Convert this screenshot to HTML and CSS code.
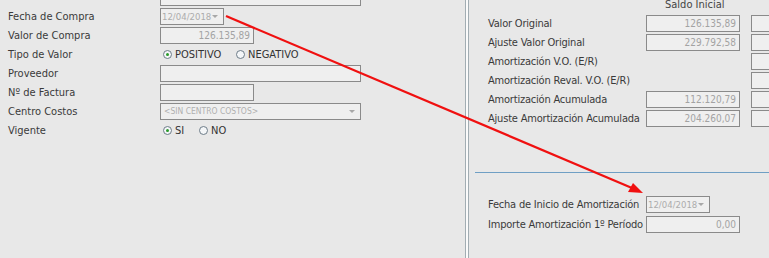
FILE: index.html
```html
<!DOCTYPE html>
<html lang="es">
<head>
  <meta charset="UTF-8">
  <title>Alta de Bien</title>
  <link rel="stylesheet" href="styles.css">
</head>
<body>

  <div class="pagina">

    <div class="panel-izq">
      <div class="fila">
        <span class="etiqueta"></span>
        <div class="campo ancho-lg"><span class="flecha"></span></div>
      </div>
      <div class="fila">
        <span class="etiqueta">Fecha de Compra</span>
        <div class="campo fecha">12/04/2018<span class="flecha"></span></div>
      </div>
      <div class="fila">
        <span class="etiqueta">Valor de Compra</span>
        <div class="campo ancho-md num">126.135,89</div>
      </div>
      <div class="fila">
        <span class="etiqueta">Tipo de Valor</span>
        <div class="radios">
          <label class="radio activo"><span class="circulo"></span>POSITIVO</label>
          <label class="radio"><span class="circulo"></span>NEGATIVO</label>
        </div>
      </div>
      <div class="fila">
        <span class="etiqueta">Proveedor</span>
        <div class="campo ancho-lg"></div>
      </div>
      <div class="fila">
        <span class="etiqueta">Nº de Factura</span>
        <div class="campo ancho-md"></div>
      </div>
      <div class="fila">
        <span class="etiqueta">Centro Costos</span>
        <div class="campo ancho-lg combo">&lt;SIN CENTRO COSTOS&gt;<span class="flecha"></span></div>
      </div>
      <div class="fila">
        <span class="etiqueta">Vigente</span>
        <div class="radios">
          <label class="radio radio-si activo"><span class="circulo"></span>SI</label>
          <label class="radio"><span class="circulo"></span>NO</label>
        </div>
      </div>
    </div>

    <div class="separador"></div>

    <div class="panel-der">
      <div class="fila-der">
        <span class="etiqueta"></span>
        <span class="titulo-col">Saldo Inicial</span>
      </div>
      <div class="fila-der">
        <span class="etiqueta">Valor Original</span>
        <div class="campo ancho-md num">126.135,89</div>
        <div class="campo ancho-md"></div>
      </div>
      <div class="fila-der">
        <span class="etiqueta">Ajuste Valor Original</span>
        <div class="campo ancho-md num">229.792,58</div>
        <div class="campo ancho-md"></div>
      </div>
      <div class="fila-der">
        <span class="etiqueta">Amortización V.O. (E/R)</span>
        <span></span>
        <div class="campo ancho-md"></div>
      </div>
      <div class="fila-der">
        <span class="etiqueta">Amortización Reval. V.O. (E/R)</span>
        <span></span>
        <div class="campo ancho-md"></div>
      </div>
      <div class="fila-der">
        <span class="etiqueta">Amortización Acumulada</span>
        <div class="campo ancho-md num">112.120,79</div>
        <div class="campo ancho-md"></div>
      </div>
      <div class="fila-der">
        <span class="etiqueta">Ajuste Amortización Acumulada</span>
        <div class="campo ancho-md num">204.260,07</div>
        <div class="campo ancho-md"></div>
      </div>

      <hr class="linea-azul">

      <div class="bloque-amort">
        <div class="fila-der">
          <span class="etiqueta">Fecha de Inicio de Amortización</span>
          <div class="campo fecha">12/04/2018<span class="flecha"></span></div>
        </div>
        <div class="fila-der">
          <span class="etiqueta">Importe Amortización 1º Período</span>
          <div class="campo ancho-md num">0,00</div>
        </div>
      </div>
    </div>

    <svg class="marca" width="769" height="258" viewBox="0 0 769 258">
      <line x1="226" y1="16" x2="632" y2="188" stroke="#f01010" stroke-width="2.2"/>
      <polygon points="643,193 628,192 633,183" fill="#f01010"/>
    </svg>

  </div>

</body>
</html>
```

FILE: styles.css
```css
body {
  margin: 0;
  background: #e8e8e8;
  font-family: "DejaVu Sans Condensed", "DejaVu Sans", sans-serif;
  font-stretch: condensed;
  font-size: 11px;
  color: #3a3a3a;
  overflow: hidden;
}

.pagina {
  position: relative;
  display: flex;
  width: 769px;
  height: 258px;
  overflow: hidden;
}

/* panel izquierdo */
.panel-izq {
  flex: none;
  width: 465px;
  padding-left: 8px;
  margin-top: -12px;
  box-sizing: border-box;
}

.fila {
  display: grid;
  grid-template-columns: 152px auto;
  align-items: center;
  height: 19px;
}

.etiqueta {
  white-space: nowrap;
}

.campo {
  position: relative;
  height: 17px;
  box-sizing: border-box;
  border: 1px solid #8a8a8a;
  background: #efefef;
  color: #a3a3a3;
  font-size: 10px;
  line-height: 15px;
  padding: 0 3px;
  white-space: nowrap;
}

.ancho-lg { width: 201px; }
.ancho-md { width: 94px; }

.fecha {
  width: 64px;
  padding-left: 1px;
  font-size: 9.5px;
  color: #acacac;
}

.num { text-align: right; }

.combo {
  font-size: 8.5px;
  color: #b0b0b0;
}

.flecha {
  position: absolute;
  right: 5px;
  top: 6px;
  border-left: 3px solid transparent;
  border-right: 3px solid transparent;
  border-top: 3px solid #a8a8a8;
}

.radios {
  display: flex;
  padding-left: 3px;
}

.radio {
  display: flex;
  align-items: center;
  width: 73px;
  font-size: 11px;
  color: #333;
}

.radio-si { width: 36px; }

.circulo {
  position: relative;
  width: 9px;
  height: 9px;
  border: 1px solid #6d7c88;
  border-radius: 50%;
  background: #f4f6f8;
  margin-right: 3px;
  box-sizing: border-box;
}

.activo .circulo::after {
  content: "";
  position: absolute;
  left: 2px;
  top: 2px;
  width: 3px;
  height: 3px;
  border-radius: 50%;
  background: #2a9a2a;
}

/* separador */
.separador {
  flex: none;
  width: 2px;
  border-left: 1px solid #a2adb3;
  border-right: 1px solid #a2adb3;
  background: #fbfbfb;
}

/* panel derecho */
.panel-der {
  flex: 1;
  min-width: 0;
  overflow: hidden;
  margin-top: -5px;
}

.fila-der {
  display: grid;
  grid-template-columns: 158px 105px 94px;
  align-items: center;
  height: 19px;
  padding-left: 19px;
}

.fila-der .etiqueta {
  letter-spacing: -0.2px;
}

.titulo-col {
  grid-column: 2 / 4;
  padding-left: 19px;
  color: #444;
}

.linea-azul {
  border: none;
  border-top: 1px solid #6f9fc4;
  margin: 44px 0 0 6px;
}

.bloque-amort {
  margin-top: 21px;
}

.bloque-amort .fila-der {
  height: 20px;
}

.marca {
  position: absolute;
  left: 0;
  top: 0;
  pointer-events: none;
}
```
